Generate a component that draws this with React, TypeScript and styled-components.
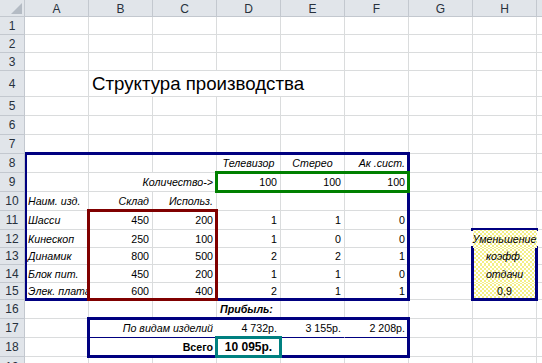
import React from 'react';
import styled, { createGlobalStyle, css } from 'styled-components';

const GlobalStyle = createGlobalStyle`
  html, body { margin: 0; padding: 0; background: #fff; overflow: hidden; }
  body { font-family: "Liberation Sans", Arial, sans-serif; color: #000; }
  #root { width: 542px; height: 363px; overflow: hidden; }
`;

const COLS = ['A', 'B', 'C', 'D', 'E', 'F', 'G', 'H', 'I'];
const ROW_H = [18, 18, 18, 26, 19, 19, 19, 19, 19, 19, 19, 18, 17, 18, 17, 19, 19, 19, 20];
const GRID = '#dadcdd';
const HEAD_LINE = '#c3c8cf';
const HEAD_BG = '#e1e5ea';
const NAVY = '#000080';

const Sheet = styled.div`
  display: grid;
  grid-template-columns: 25px repeat(8, 64px) 1fr;
  grid-template-rows: 17px ${ROW_H.map((h) => `${h}px`).join(' ')};
  width: 542px;
  height: 363px;
  overflow: hidden;
  background: #fff;
`;

const Corner = styled.div`
  grid-row: 1;
  grid-column: 1;
  background: ${HEAD_BG};
  border-right: 1px solid ${HEAD_LINE};
  border-bottom: 1px solid ${HEAD_LINE};
  display: flex;
  align-items: flex-end;
  justify-content: flex-end;
  padding: 0 2px 2px 0;
  box-sizing: border-box;
`;

const ColHead = styled.div<{ $col: number }>`
  grid-row: 1;
  grid-column: ${(p) => p.$col};
  background: ${HEAD_BG};
  border-right: 1px solid ${HEAD_LINE};
  border-bottom: 1px solid ${HEAD_LINE};
  box-sizing: border-box;
  display: flex;
  align-items: center;
  justify-content: center;
  font-size: 12px;
  color: #27313d;
  padding-top: 1px;
`;

const RowHead = styled.div<{ $row: number }>`
  grid-row: ${(p) => p.$row};
  grid-column: 1;
  background: ${HEAD_BG};
  border-right: 1px solid ${HEAD_LINE};
  border-bottom: 1px solid ${HEAD_LINE};
  box-sizing: border-box;
  display: flex;
  align-items: center;
  justify-content: center;
  font-size: 12px;
  color: #27313d;
`;

type Align = 'l' | 'c' | 'r';
type Fill = 'white' | 'dots';

const justify = { l: 'flex-start', c: 'center', r: 'flex-end' };

const Cell = styled.div<{
  $row: number;
  $col: number;
  $span: number;
  $al: Align;
  $i?: boolean;
  $b?: boolean;
  $size: number;
  $fill?: Fill;
  $noR?: boolean;
  $bc?: string;
  $valign?: 'c' | 'b';
  $over?: boolean;
}>`
  grid-row: ${(p) => p.$row};
  grid-column: ${(p) => p.$col} / span ${(p) => p.$span};
  box-sizing: border-box;
  display: flex;
  align-items: ${(p) => (p.$valign === 'b' ? 'flex-end' : 'center')};
  justify-content: ${(p) => justify[p.$al]};
  padding: ${(p) => (p.$valign === 'b' ? '0 3px 1px 3px' : '0 3px')};
  white-space: nowrap;
  overflow: ${(p) => (p.$over ? 'visible' : 'hidden')};
  font-size: ${(p) => p.$size}px;
  font-style: ${(p) => (p.$i ? 'italic' : 'normal')};
  font-weight: ${(p) => (p.$b ? 700 : 400)};
  border-right: 1px solid ${(p) => (p.$fill || p.$noR ? 'transparent' : GRID)};
  border-bottom: 1px solid ${(p) => p.$bc ?? (p.$fill ? 'transparent' : GRID)};
  ${(p) => p.$over && css`z-index: 5;`}
  ${(p) =>
    p.$fill === 'dots' &&
    css`
      background-color: #fff;
      background-image: radial-gradient(circle, #e6dc00 0.55px, transparent 0.85px),
        radial-gradient(circle, #e6dc00 0.55px, transparent 0.85px);
      background-size: 4px 4px;
      background-position: 0 0, 2px 2px;
    `}
`;

const Frame = styled.div<{
  $r1: number;
  $r2: number;
  $c1: number;
  $c2: number;
  $color: string;
  $z: number;
  $sides?: string;
  $ml?: number;
}>`
  grid-row: ${(p) => p.$r1 + 1} / ${(p) => p.$r2 + 2};
  grid-column: ${(p) => p.$c1 + 2} / ${(p) => p.$c2 + 3};
  z-index: ${(p) => p.$z};
  pointer-events: none;
  box-sizing: border-box;
  margin: -2px -1px -1px ${(p) => (p.$ml ?? -2)}px;
  border-style: solid;
  border-color: ${(p) => p.$color};
  border-width: ${(p) => p.$sides ?? '3px'};
`;

type Spec = {
  t: string;
  al?: Align;
  i?: boolean;
  b?: boolean;
  span?: number;
  size?: number;
  fill?: Fill;
  bc?: string;
  noR?: boolean;
  valign?: 'c' | 'b';
  over?: boolean;
};

const S: Record<string, Spec> = {
  '4-B': { t: 'Структура производства', al: 'l', span: 4, size: 18.67, valign: 'b' },
  '8-D': { t: 'Телевизор', al: 'c', i: true },
  '8-E': { t: 'Стерео', al: 'c', i: true },
  '8-F': { t: 'Ак .сист.', al: 'r', i: true },
  '9-B': { t: 'Количество->', al: 'r', i: true, span: 2 },
  '9-D': { t: '100' },
  '9-E': { t: '100' },
  '9-F': { t: '100' },
  '10-A': { t: 'Наим. изд.', al: 'l', i: true },
  '10-B': { t: 'Склад', i: true },
  '10-C': { t: 'Использ.', i: true },
  '12-G': { t: '', noR: true },
  '12-H': { t: 'Уменьшение', al: 'c', i: true, fill: 'dots', over: true },
  '13-H': { t: 'коэфф.', al: 'c', i: true, fill: 'dots' },
  '14-H': { t: 'отдачи', al: 'c', i: true, fill: 'dots' },
  '15-H': { t: '0,9', al: 'c', fill: 'dots' },
  '16-D': { t: 'Прибыль:', al: 'l', i: true, b: true },
  '17-B': { t: 'По видам изделий', i: true, span: 2, fill: 'white', bc: NAVY },
  '17-D': { t: '4 732р.', fill: 'white', bc: NAVY },
  '17-E': { t: '3 155р.', fill: 'white', bc: NAVY },
  '17-F': { t: '2 208р.', fill: 'white', bc: NAVY },
  '18-B': { t: 'Всего', b: true, span: 2, fill: 'white' },
  '18-D': { t: '10 095р.', al: 'c', b: true, fill: 'white', size: 12 },
  '18-E': { t: '', fill: 'white' },
  '18-F': { t: '', fill: 'white' },
};

const items: [string, string, string, string, string][] = [
  ['Шасси', '450', '200', '1', '1'],
  ['Кинескоп', '250', '100', '1', '0'],
  ['Динамик', '800', '500', '2', '2'],
  ['Блок пит.', '450', '200', '1', '1'],
  ['Элек. плата', '600', '400', '2', '1'],
];
const lastCol = ['0', '0', '1', '0', '1'];
items.forEach((it, k) => {
  const r = 11 + k;
  S[`${r}-A`] = { t: it[0], al: 'l', i: true };
  S[`${r}-B`] = { t: it[1] };
  S[`${r}-C`] = { t: it[2] };
  S[`${r}-D`] = { t: it[3] };
  S[`${r}-E`] = { t: it[4] };
  S[`${r}-F`] = { t: lastCol[k] };
});

const CornerMark = () => (
  <svg width="11" height="11" viewBox="0 0 11 11">
    <polygon points="11,0 11,11 0,11" fill="#b4bbc4" />
  </svg>
);

export default function App() {
  const cells: React.ReactNode[] = [];
  for (let r = 1; r <= 19; r++) {
    cells.push(
      <RowHead key={`rh${r}`} $row={r + 1}>
        {r}
      </RowHead>
    );
    let c = 0;
    while (c < COLS.length) {
      const spec = S[`${r}-${COLS[c]}`];
      const span = spec?.span ?? 1;
      cells.push(
        <Cell
          key={`c${r}-${c}`}
          $row={r + 1}
          $col={c + 2}
          $span={span}
          $al={spec?.al ?? 'r'}
          $i={spec?.i}
          $b={spec?.b}
          $size={spec?.size ?? 10.67}
          $fill={spec?.fill}
          $noR={spec?.noR}
          $bc={spec?.bc}
          $valign={spec?.valign}
          $over={spec?.over}
        >
          {spec?.t}
        </Cell>
      );
      c += span;
    }
  }

  return (
    <>
      <GlobalStyle />
      <Sheet>
        <Corner>
          <CornerMark />
        </Corner>
        {COLS.map((l, i) => (
          <ColHead key={l} $col={i + 2}>
            {l === 'I' ? '' : l}
          </ColHead>
        ))}
        {cells}
        <Frame $r1={8} $r2={15} $c1={0} $c2={5} $color={NAVY} $z={2} $ml={0} $sides="3px 3px 3px 2px" />
        <Frame $r1={17} $r2={18} $c1={1} $c2={5} $color={NAVY} $z={2} />
        <Frame $r1={11} $r2={15} $c1={1} $c2={2} $color="#800000" $z={3} />
        <Frame $r1={9} $r2={9} $c1={3} $c2={5} $color="#008000" $z={3} />
        <Frame $r1={18} $r2={18} $c1={3} $c2={3} $color="#008080" $z={3} />
        <Frame $r1={12} $r2={12} $c1={7} $c2={7} $color={NAVY} $z={3} $sides="3px 0 0 0" />
        <Frame $r1={13} $r2={15} $c1={7} $c2={7} $color={NAVY} $z={3} $sides="0 3px 3px 3px" />
      </Sheet>
    </>
  );
}
